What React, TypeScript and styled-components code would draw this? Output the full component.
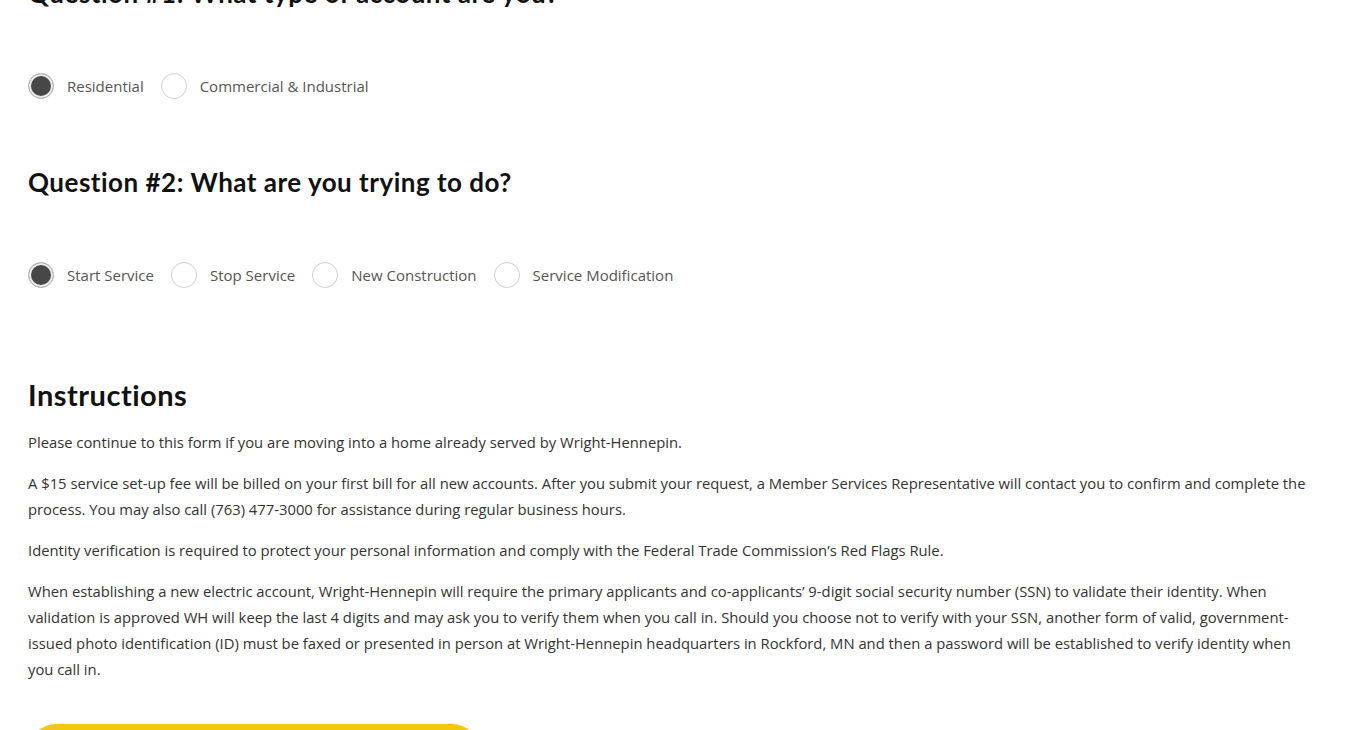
import { useState } from 'react'
import styled, { createGlobalStyle } from 'styled-components'

const GlobalStyle = createGlobalStyle`
    html, body {
        margin: 0;
        padding: 0;
        background: #ffffff;
    }
    body {
        font-family: 'Open Sans', 'Liberation Sans', sans-serif;
        color: #333333;
        overflow: hidden;
    }
`

const Page = styled.main`
    padding: 0 32px 0 28px;
    margin-top: -23px;
`

const Section = styled.section`
    display: flex;
    flex-direction: column;
`

const Question = styled.h2`
    margin: 0;
    font-family: Lato, 'Open Sans', sans-serif;
    font-weight: 700;
    font-size: 26px;
    line-height: 32px;
    letter-spacing: 0.5px;
    color: #111111;
`

const RadioGroup = styled.div`
    display: flex;
    align-items: center;
    gap: 17px;
    margin: 64px 0 67px;
`

const Option = styled.label`
    display: flex;
    align-items: center;
    gap: 13px;
    cursor: pointer;
`

const Circle = styled.span<{ checked: boolean }>`
    width: 26px;
    height: 26px;
    box-sizing: border-box;
    border-radius: 50%;
    border: 1px solid ${({ checked }): string => (checked ? '#c4c4c4' : '#cfcfcf')};
    background: ${({ checked }): string => (checked ? '#474747' : '#ffffff')};
    box-shadow: ${({ checked }): string =>
        checked ? 'inset 0 0 0 2px #ececec' : 'none'};
`

const OptionText = styled.span`
    font-size: 15px;
    color: #555555;
    line-height: 26px;
`

const Heading = styled.h2`
    margin: 22px 0 16px;
    font-family: Lato, 'Open Sans', sans-serif;
    font-weight: 700;
    font-size: 29px;
    line-height: 36px;
    letter-spacing: 0.5px;
    color: #111111;
`

const Text = styled.p`
    margin: 0 0 15px;
    font-size: 14.8px;
    line-height: 26px;
    color: #333333;
`

const Submit = styled.button`
    margin-top: 27px;
    width: 452px;
    height: 56px;
    border: none;
    border-radius: 28px;
    background: #f2c80f;
    font-family: 'Open Sans', sans-serif;
    font-size: 16px;
    font-weight: 700;
    color: #222222;
`

type Choice = { value: string; label: string }

const accountTypes: Choice[] = [
    { value: 'res', label: 'Residential' },
    { value: 'com', label: 'Commercial & Industrial' },
]

const actions: Choice[] = [
    { value: 'start', label: 'Start Service' },
    { value: 'stop', label: 'Stop Service' },
    { value: 'new', label: 'New Construction' },
    { value: 'mod', label: 'Service Modification' },
]

const Radios = ({
    options,
    value,
    onChange,
}: {
    options: Choice[]
    value: string
    onChange: (v: string) => void
}): JSX.Element => (
    <RadioGroup role='radiogroup'>
        {options.map((o) => (
            <Option key={o.value} onClick={(): void => onChange(o.value)}>
                <Circle checked={value === o.value} />
                <OptionText>{o.label}</OptionText>
            </Option>
        ))}
    </RadioGroup>
)

export default function App(): JSX.Element {
    const [account, setAccount] = useState('res')
    const [action, setAction] = useState('start')

    return (
        <>
            <GlobalStyle />
            <Page>
                <Section>
                    <Question>Question #1: What type of account are you?</Question>
                    <Radios options={accountTypes} value={account} onChange={setAccount} />
                </Section>
                <Section>
                    <Question>Question #2: What are you trying to do?</Question>
                    <Radios options={actions} value={action} onChange={setAction} />
                </Section>
                <Section>
                    <Heading>Instructions</Heading>
                    <Text>
                        Please continue to this form if you are moving into a home already
                        served by Wright-Hennepin.
                    </Text>
                    <Text>
                        A $15 service set-up fee will be billed on your first bill for all new
                        accounts. After you submit your request, a Member Services
                        Representative will contact you to confirm and complete the process. You
                        may also call (763) 477-3000 for assistance during regular business
                        hours.
                    </Text>
                    <Text>
                        Identity verification is required to protect your personal information
                        and comply with the Federal Trade Commission’s Red Flags Rule.
                    </Text>
                    <Text>
                        When establishing a new electric account, Wright-Hennepin will require
                        the primary applicants and co-applicants’ 9-digit social security number
                        (SSN) to validate their identity. When validation is approved WH will
                        keep the last 4 digits and may ask you to verify them when you call in.
                        Should you choose not to verify with your SSN, another form of valid,
                        government-issued photo identification (ID) must be faxed or presented
                        in person at Wright-Hennepin headquarters in Rockford, MN and then a
                        password will be established to verify identity when you call in.
                    </Text>
                    <div>
                        <Submit type='button'>Continue</Submit>
                    </div>
                </Section>
            </Page>
        </>
    )
}
